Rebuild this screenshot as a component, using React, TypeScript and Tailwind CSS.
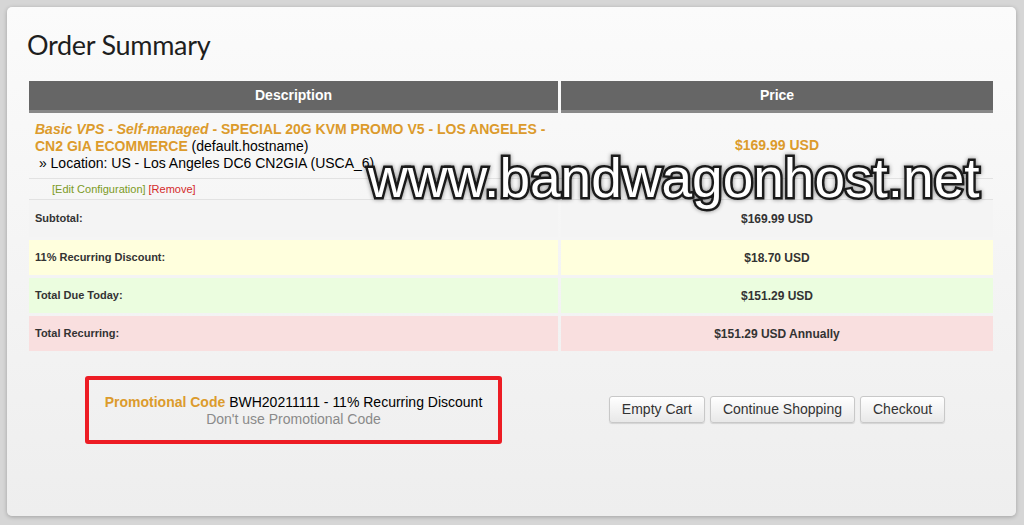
export default function App() {
  const font = "font-['Liberation_Sans',Arial,sans-serif]";

  return (
    <div className={`w-[1024px] h-[525px] bg-[#d6d6d6] pt-[7px] pl-[7px] pr-[8px] ${font}`}>
      <div className="relative h-[509px] rounded-[5px] bg-gradient-to-b from-[#fbfbfb] to-[#eeeeee] shadow-[0_1px_4px_rgba(0,0,0,0.25)] pl-[20px] pr-[23px] pt-[21px]">
        <h1 className="font-['Lato',sans-serif] text-[27px] leading-[34px] text-[#1e1e1e] tracking-[-0.3px]">
          Order Summary
        </h1>

        <div className="ml-[2px] mt-[19px] w-[964px]">
          {/* header */}
          <div className="grid grid-cols-[529px_432px] gap-x-[3px]">
            <div className="h-[32px] bg-[#666666] border-b-[3px] border-[#888888] flex items-center justify-center text-white font-bold text-[14px]">
              Description
            </div>
            <div className="h-[32px] bg-[#666666] border-b-[3px] border-[#888888] flex items-center justify-center text-white font-bold text-[14px]">
              Price
            </div>
          </div>

          {/* product */}
          <div className="grid grid-cols-[529px_432px] gap-x-[3px] border-b border-[#e2e2e2]">
            <div className="pl-[6px] pr-[2px] pt-[8px] pb-[6px] text-[14px] leading-[17px] text-black">
              <span className="font-bold text-[#dc9b2c]">
                <em>Basic VPS - Self-managed</em> - SPECIAL 20G KVM PROMO V5 - LOS ANGELES - CN2 GIA ECOMMERCE
              </span>{' '}
              (default.hostname)
              <br />
              &nbsp;» Location: US - Los Angeles DC6 CN2GIA (USCA_6)
            </div>
            <div className="flex items-center justify-center font-bold text-[14px] text-[#dc9b2c]">
              $169.99 USD
            </div>
          </div>
          <div className="h-[21px] border-b border-[#e2e2e2] pl-[23px] flex items-center text-[11px]">
            <span className="text-[#7c9a25]">[Edit Configuration]</span>
            <span className="ml-[3px] text-[#d42a2a]">[Remove]</span>
          </div>

          {/* totals */}
          <div className="flex flex-col gap-y-[3px] text-[#333333] font-bold">
            <div className="grid grid-cols-[529px_432px] gap-x-[3px] h-[37px]">
              <div className="bg-[#f4f4f4] pl-[6px] flex items-center text-[11px]">Subtotal:</div>
              <div className="bg-[#f4f4f4] flex items-center justify-center text-[12px]">$169.99 USD</div>
            </div>
            <div className="grid grid-cols-[529px_432px] gap-x-[3px] h-[35px]">
              <div className="bg-[#ffffdd] pl-[6px] flex items-center text-[11px]">11% Recurring Discount:</div>
              <div className="bg-[#ffffdd] flex items-center justify-center text-[12px]">$18.70 USD</div>
            </div>
            <div className="grid grid-cols-[529px_432px] gap-x-[3px] h-[35px]">
              <div className="bg-[#ebfddf] pl-[6px] flex items-center text-[11px]">Total Due Today:</div>
              <div className="bg-[#ebfddf] flex items-center justify-center text-[12px]">$151.29 USD</div>
            </div>
            <div className="grid grid-cols-[529px_432px] gap-x-[3px] h-[35px]">
              <div className="bg-[#f9dfdf] pl-[6px] flex items-center text-[11px]">Total Recurring:</div>
              <div className="bg-[#f9dfdf] flex items-center justify-center text-[12px]">$151.29 USD Annually</div>
            </div>
          </div>

          {/* promo + buttons */}
          <div className="grid grid-cols-[529px_432px] gap-x-[3px] mt-[25px] items-center">
            <div className="flex justify-center">
              <div className="w-[417px] h-[68px] border-[4px] border-[#ed1c24] rounded-[3px] flex flex-col items-center justify-center pt-[2px] text-[14px] leading-[17px]">
                <div>
                  <span className="font-bold text-[#dc9b2c]">Promotional Code</span>{' '}
                  <span className="text-black">BWH20211111 - 11% Recurring Discount</span>
                </div>
                <div className="text-[#8a8a8a]">Don't use Promotional Code</div>
              </div>
            </div>
            <div className="flex justify-center gap-x-[5px] -mt-[1px]">
              {['Empty Cart', 'Continue Shopping', 'Checkout'].map((label) => (
                <button
                  key={label}
                  className="h-[27px] px-[12px] rounded-[3px] border border-[#c8c8c8] bg-gradient-to-b from-white to-[#e8e8e8] shadow-[0_1px_1px_rgba(0,0,0,0.12)] text-[14px] text-[#333333]"
                >
                  {label}
                </button>
              ))}
            </div>
          </div>
        </div>

        {/* watermark overlay */}
        <div className="absolute left-[361px] top-[140px] text-[55px] leading-[62px] text-white [paint-order:stroke_fill] [-webkit-text-stroke:5px_#1a1a1a] drop-shadow-[0_0_2px_rgba(0,0,0,0.45)] pointer-events-none">
          www.bandwagonhost.net
        </div>
      </div>
    </div>
  );
}
